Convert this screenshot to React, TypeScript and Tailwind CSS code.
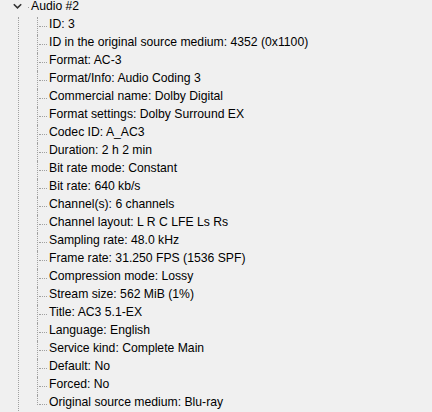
import React from "react";

const items = [
  "ID: 3",
  "ID in the original source medium: 4352 (0x1100)",
  "Format: AC-3",
  "Format/Info: Audio Coding 3",
  "Commercial name: Dolby Digital",
  "Format settings: Dolby Surround EX",
  "Codec ID: A_AC3",
  "Duration: 2 h 2 min",
  "Bit rate mode: Constant",
  "Bit rate: 640 kb/s",
  "Channel(s): 6 channels",
  "Channel layout: L R C LFE Ls Rs",
  "Sampling rate: 48.0 kHz",
  "Frame rate: 31.250 FPS (1536 SPF)",
  "Compression mode: Lossy",
  "Stream size: 562 MiB (1%)",
  "Title: AC3 5.1-EX",
  "Language: English",
  "Service kind: Complete Main",
  "Default: No",
  "Forced: No",
  "Original source medium: Blu-ray",
];

export default function App() {
  return (
    <div className="w-[432px] h-[412px] overflow-hidden bg-[#f0f0f0] font-['Liberation_Sans',Arial,sans-serif] text-[12.2px] text-black">
      <div className="-mt-px">
        <div className="flex h-[18px] items-start">
          <div className="w-[13px]" />
          <svg width="9" height="18" viewBox="0 0 9 18" className="shrink-0">
            <path d="M0.8 5.2 L4.5 8.8 L8.2 5.2" fill="none" stroke="#333" strokeWidth="1.6" />
          </svg>
          <div className="relative w-[9px] h-[18px] shrink-0">
            <div className="absolute left-[6px] top-[8px] w-px h-px bg-[#a0a0a0]" />
          </div>
          <span className="leading-[14px] whitespace-nowrap">Audio #2</span>
        </div>
        <div className="ml-[18px] border-l border-dotted border-[#a0a0a0] pl-[18px]">
          {items.map((t, i) => {
            const last = i === items.length - 1;
            return (
              <div key={i} className="flex h-[18px] items-start">
                <div className="relative w-[12px] h-[18px] shrink-0">
                  <div
                    className={
                      "absolute left-0 top-0 border-l border-dotted border-[#a0a0a0] " +
                      (last ? "h-[10px]" : "h-[18px]")
                    }
                  />
                  <div className="absolute left-[2px] top-[9px] w-[8px] border-t border-dotted border-[#a0a0a0]" />
                </div>
                <span className="leading-[14px] whitespace-nowrap">{t}</span>
              </div>
            );
          })}
        </div>
      </div>
    </div>
  );
}
